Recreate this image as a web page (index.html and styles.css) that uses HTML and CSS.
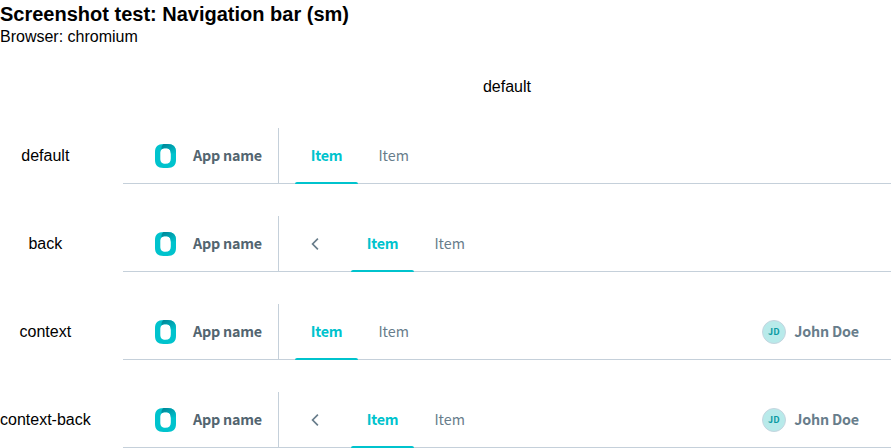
FILE: index.html
```html
<!DOCTYPE html>
<html lang="en">
<head>
<meta charset="utf-8">
<title>Navigation bar (sm)</title>
<link rel="stylesheet" href="styles.css">
</head>
<body>
<svg width="0" height="0" class="defs">
  <defs>
    <linearGradient id="fold" x1="0" y1="0" x2="1" y2="1"><stop offset="0" stop-color="#008294"/><stop offset="1" stop-color="#00c3cd"/></linearGradient>
    <symbol id="logo" viewBox="0 0 22 24">
      <path fill="#00c3cd" fill-rule="evenodd" d="M8.500 0H12.500C18.300 0 21 2.700 21 8V16C21 21.300 18.300 24 12.500 24H8.500C2.700 24 0 21.300 0 16V8C0 2.700 2.700 0 8.500 0ZM10.500 4.200C6.900 4.200 5.300 6 5.300 9.500V14.500C5.300 18 6.900 19.800 10.500 19.800S15.800 18 15.800 14.500V9.500C15.800 6 14.200 4.200 10.500 4.200Z"/>
      <path fill="url(#fold)" d="M8.500 0H12.500C18.300 0 21 2.700 21 8V9.500H15.800C15.800 6 14.200 4.200 10.500 4.200C8.700 4.200 7.300 4.600 6.500 5.500C6.200 3.500 6.700 1.500 8.500 0Z"/>
    </symbol>
    <symbol id="back" viewBox="0 0 16 16"><path fill="none" stroke="#687d8b" stroke-width="1.700" d="M10.900 2.700 5.600 8l5.300 5.300"/></symbol>
  </defs>
</svg>
<h1>Screenshot test: Navigation bar (sm)</h1>
<p>Browser: chromium</p>
<main class="grid">
  <div class="column-title">default</div>
  <div class="label">default</div>
  <nav class="bar">
    <div class="brand"><svg class="logo"><use href="#logo"/></svg><span>App name</span></div>
    <div class="items"><a class="item active"><span>Item</span></a><a class="item"><span>Item</span></a></div>
  </nav>
  <div class="label">back</div>
  <nav class="bar">
    <div class="brand"><svg class="logo"><use href="#logo"/></svg><span>App name</span></div>
    <div class="items"><a class="back"><svg width="16" height="16"><use href="#back"/></svg></a><a class="item active"><span>Item</span></a><a class="item"><span>Item</span></a></div>
  </nav>
  <div class="label">context</div>
  <nav class="bar">
    <div class="brand"><svg class="logo"><use href="#logo"/></svg><span>App name</span></div>
    <div class="items"><a class="item active"><span>Item</span></a><a class="item"><span>Item</span></a></div>
    <div class="user"><span class="avatar">JD</span><span>John Doe</span></div>
  </nav>
  <div class="label">context-back</div>
  <nav class="bar">
    <div class="brand"><svg class="logo"><use href="#logo"/></svg><span>App name</span></div>
    <div class="items"><a class="back"><svg width="16" height="16"><use href="#back"/></svg></a><a class="item active"><span>Item</span></a><a class="item"><span>Item</span></a></div>
    <div class="user"><span class="avatar">JD</span><span>John Doe</span></div>
  </nav>
</main>
</body>
</html>
```
FILE: styles.css
```css
* { box-sizing: border-box; }
body { margin: 0; background: #fff; color: #000; font: 16px/18px "Liberation Sans", Arial, sans-serif; overflow: hidden; }
.defs { position: absolute; }
h1 { margin: 0; padding-top: 3px; font-size: 20px; line-height: 22px; }
p { margin: 3px 0 0; }
.grid { display: grid; grid-template-columns: 90.700px 768px; column-gap: 32.300px; row-gap: 32px; grid-template-rows: 19px repeat(4, 56px); margin-top: 31px; align-items: center; }
.column-title { grid-column: 2; text-align: center; }
.label { text-align: center; white-space: nowrap; }
.bar { display: flex; height: 56px; border-bottom: 1px solid #c5d0da; font: 14.3px/24px "Noto Sans CJK SC", sans-serif; color: #637381; }
.brand { display: flex; align-items: center; width: 156px; padding-left: 32px; border-right: 1px solid #c5d0da; color: #536570; font-weight: 700; letter-spacing: -0.21px; white-space: nowrap; }
.brand span, .item span, .user span:last-child { padding-bottom: 2px; }
.logo { width: 22px; height: 24px; margin-right: 16px; }
.items { display: flex; padding-left: 16px; }
.item { display: flex; align-items: center; height: 56px; padding: 0 16px; margin-right: 4.400px; color: #687d8b; }
.item.active { width: 63px; padding-left: 15.700px; color: #00c3cd; font-weight: 700; letter-spacing: -0.21px; position: relative; }
.item.active::after { content: ""; position: absolute; inset: auto 0 0 0; height: 2px; border-radius: 2px 2px 0 0; background: #00c3cd; }
.back { display: flex; align-items: center; height: 56px; width: 56px; padding-left: 12px; }
.user { display: flex; align-items: center; margin-left: auto; padding-right: 32px; gap: 8.400px; font-weight: 700; letter-spacing: -0.17px; color: #687d8b; }
.avatar { display: flex; align-items: center; justify-content: center; width: 24px; height: 24px; border: 1px solid #c5d5df; border-radius: 50%; background: #b8eaea; color: #0c9ba3; font-size: 9px; line-height: 12px; letter-spacing: 0; }
```
